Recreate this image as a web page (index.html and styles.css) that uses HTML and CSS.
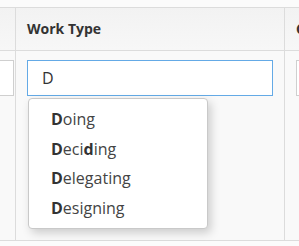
FILE: index.html
```html
<!DOCTYPE html>
<html>
<head>
<title>Work Type</title>
<link rel="stylesheet" href="styles.css">
</head>
<body>

<div class="grid">
  <div class="head first"></div>
  <div class="head">Work Type</div>
  <div class="head last">Category</div>

  <div class="cell first">
    <div class="field plain"></div>
  </div>
  <div class="cell">
    <div class="field focus">D</div>
    <ul class="suggest">
      <li><b>D</b>oing</li>
      <li><b>D</b>eci<b>d</b>ing</li>
      <li><b>D</b>elegating</li>
      <li><b>D</b>esigning</li>
    </ul>
  </div>
  <div class="cell last">
    <div class="field plain"></div>
  </div>
</div>

</body>
</html>
```

FILE: styles.css
```css
body {
  margin: 0;
  padding-top: 7px;
  background-color: #fbfbfb;
  font-family: 'Open Sans', sans-serif;
  color: #333;
  overflow: hidden;
}

.grid {
  display: grid;
  grid-template-columns: 16px 269px 60px;
  grid-template-rows: 43px 189px;
  margin-left: -1px;
  border-top: 1px solid #dcdcdc;
  border-bottom: 1px solid #dcdcdc;
  width: 360px;
}

.head {
  background: linear-gradient(#f2f2f2, #f7f7f7);
  border-left: 1px solid #dcdcdc;
  border-bottom: 1px solid #dcdcdc;
  font-size: 14px;
  font-weight: bold;
  line-height: 42px;
  padding-left: 11px;
  white-space: nowrap;
  overflow: hidden;
}

.head.first,
.cell.first {
  padding-left: 0;
}

.cell {
  position: relative;
  background-color: #f9f9f9;
  border-left: 1px solid #dcdcdc;
  padding: 9px 0 0 11px;
}

.field {
  box-sizing: border-box;
  height: 36px;
  background-color: #fff;
  font-size: 16px;
  line-height: 34px;
  padding-left: 14px;
}

.field.focus {
  width: 246px;
  border: 1px solid #64aae6;
}

.cell.first .field {
  width: 4px;
  margin-left: -1px;
  border: 1px solid #cfcfcf;
  border-left: none;
}

.cell.last .field {
  width: 60px;
  border: 1px solid #cfcfcf;
}

.suggest {
  position: absolute;
  left: 12px;
  top: 47px;
  width: 180px;
  box-sizing: border-box;
  margin: 0;
  padding: 6px 0 5px;
  list-style: none;
  background-color: #fff;
  border: 1px solid #c9c9c9;
  border-radius: 4px;
  box-shadow: 3px 4px 10px rgba(0, 0, 0, 0.18);
}

.suggest li {
  font-size: 16px;
  line-height: 29.5px;
  padding-left: 22px;
  color: #444;
}

.suggest b {
  color: #333;
}
```
